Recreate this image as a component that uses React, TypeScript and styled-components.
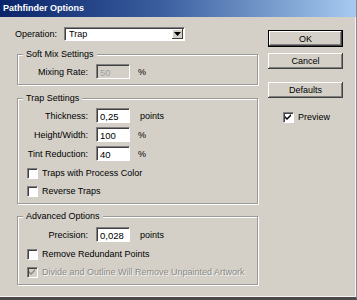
import React from 'react'
import styled, { createGlobalStyle } from 'styled-components'

const GlobalStyle = createGlobalStyle`
    html, body {
        margin: 0;
        padding: 0;
        background: #d4d0c8;
    }
    body {
        font-family: 'Liberation Sans', Arial, sans-serif;
        font-size: 9px;
        color: #000;
    }
`

const Window = styled.div`
    width: 357px;
    height: 300px;
    box-sizing: border-box;
    background: #d4d0c8;
    border-right: 1px solid #8a8a8a;
    border-bottom: 3px solid #4a4a4a;
    box-shadow: inset -1px -1px 0 #f4f4f4;
    display: flex;
    flex-direction: column;
`

const TitleBar = styled.div`
    height: 17px;
    flex: none;
    background: linear-gradient(to right, #0a246a 0%, #3a5e9e 45%, #a6caf0 100%);
    color: #fff;
    font-weight: bold;
    font-size: 9px;
    line-height: 17px;
    padding-left: 3px;
`

const Body = styled.div`
    flex: 1;
    display: flex;
`

const Main = styled.div`
    width: 258px;
    padding: 10px 0 0 15px;
    box-sizing: border-box;
    display: flex;
    flex-direction: column;
`

const Side = styled.div`
    padding: 13px 0 0 10px;
    display: flex;
    flex-direction: column;
    align-items: flex-start;
`

const OperationRow = styled.div`
    display: flex;
    align-items: center;
    gap: 7px;
    height: 14px;
`

const Select = styled.div`
    width: 121px;
    height: 14px;
    box-sizing: border-box;
    background: #fff;
    border: 1px solid;
    border-color: #808080 #fff #fff #808080;
    box-shadow: inset 1px 1px 0 #404040;
    display: flex;
    align-items: stretch;
    padding: 1px 1px 1px 4px;
`

const SelectValue = styled.span`
    flex: 1;
    line-height: 11px;
`

const SelectArrow = styled.span`
    width: 11px;
    background: #d4d0c8;
    box-shadow: inset -1px -1px 0 #404040, inset 1px 1px 0 #fff;
    display: flex;
    align-items: center;
    justify-content: center;
`

const Group = styled.fieldset<{ $mt: number; $pt: number; $pb: number }>`
    margin: ${p => p.$mt}px 0 0 2px;
    width: 241px;
    box-sizing: border-box;
    border: 1px solid #9c9a96;
    box-shadow: 1px 1px 0 #fff, inset 1px 1px 0 #fff;
    padding: ${p => p.$pt}px 0 ${p => p.$pb}px 0;
    min-inline-size: 0;
    display: flex;
    flex-direction: column;
`

const Legend = styled.legend`
    margin-left: 5px;
    padding: 0 3px;
    line-height: 12px;
    background: #d4d0c8;
`

const FieldRow = styled.div`
    display: grid;
    grid-template-columns: 70px 34px auto;
    column-gap: 8px;
    align-items: center;
    height: 15px;
    & + & {
        margin-top: 4px;
    }
`

const FieldLabel = styled.span`
    text-align: right;
`

const Unit = styled.span<{ $gap?: number }>`
    margin-left: ${p => p.$gap ?? 0}px;
`

const TextBox = styled.input<{ $disabled?: boolean }>`
    width: 34px;
    height: 15px;
    box-sizing: border-box;
    margin: 0;
    padding: 1px 0 0 3px;
    font: inherit;
    font-size: 9.5px;
    color: ${p => (p.$disabled ? '#a0a0a0' : '#000')};
    background: ${p => (p.$disabled ? '#d4d0c8' : '#fff')};
    border: 1px solid;
    border-color: #808080 #fff #fff #808080;
    box-shadow: inset 1px 1px 0 #404040;
    outline: none;
`

const CheckRow = styled.div<{ $mt: number; $disabled?: boolean }>`
    display: flex;
    align-items: center;
    gap: 4px;
    margin: ${p => p.$mt}px 0 0 9px;
    height: 12px;
    color: ${p => (p.$disabled ? '#8c8a86' : '#000')};
    text-shadow: ${p => (p.$disabled ? '1px 1px 0 #f4f4f4' : 'none')};
`

const CheckBox = styled.span<{ $disabled?: boolean }>`
    width: 11px;
    height: 11px;
    box-sizing: border-box;
    flex: none;
    background: ${p => (p.$disabled ? '#d4d0c8' : '#fff')};
    border: 1px solid;
    border-color: #808080 #fff #fff #808080;
    box-shadow: inset 1px 1px 0 #404040;
    display: flex;
    align-items: center;
    justify-content: center;
`

const Button = styled.div<{ $default?: boolean; $mt: number }>`
    width: 75px;
    height: ${p => (p.$default ? 17 : 16)}px;
    margin-top: ${p => p.$mt}px;
    box-sizing: border-box;
    background: #d4d0c8;
    border: ${p => (p.$default ? '1px solid #000' : 'none')};
    box-shadow: inset -1px -1px 0 #404040, inset 1px 1px 0 #fff, inset -2px -2px 0 #808080;
    display: flex;
    align-items: center;
    justify-content: center;
`

const PreviewRow = styled(CheckRow)`
    margin: 13px 0 0 15px;
`

const Check = ({ color = '#000' }: { color?: string }) => (
    <svg width="7" height="7" viewBox="0 0 7 7">
        <path d="M0 2 L2 4 L6 0 L6 2 L2 6 L0 4 Z" fill={color} />
    </svg>
)

const App = () => (
    <>
        <GlobalStyle />
        <Window>
            <TitleBar>Pathfinder Options</TitleBar>
            <Body>
                <Main>
                    <OperationRow>
                        <span>Operation:</span>
                        <Select>
                            <SelectValue>Trap</SelectValue>
                            <SelectArrow>
                                <svg width="7" height="4" viewBox="0 0 7 4">
                                    <path d="M0 0 H7 L3.5 4 Z" fill="#000" />
                                </svg>
                            </SelectArrow>
                        </Select>
                    </OperationRow>

                    <Group $mt={7} $pt={4} $pb={5}>
                        <Legend>Soft Mix Settings</Legend>
                        <FieldRow>
                            <FieldLabel>Mixing Rate:</FieldLabel>
                            <TextBox $disabled readOnly defaultValue="50" />
                            <Unit>%</Unit>
                        </FieldRow>
                    </Group>

                    <Group $mt={7} $pt={4} $pb={6}>
                        <Legend>Trap Settings</Legend>
                        <FieldRow>
                            <FieldLabel>Thickness:</FieldLabel>
                            <TextBox readOnly defaultValue="0,25" />
                            <Unit $gap={2}>points</Unit>
                        </FieldRow>
                        <FieldRow>
                            <FieldLabel>Height/Width:</FieldLabel>
                            <TextBox readOnly defaultValue="100" />
                            <Unit>%</Unit>
                        </FieldRow>
                        <FieldRow>
                            <FieldLabel>Tint Reduction:</FieldLabel>
                            <TextBox readOnly defaultValue="40" />
                            <Unit>%</Unit>
                        </FieldRow>
                        <CheckRow $mt={6}>
                            <CheckBox />
                            <span>Traps with Process Color</span>
                        </CheckRow>
                        <CheckRow $mt={6}>
                            <CheckBox />
                            <span>Reverse Traps</span>
                        </CheckRow>
                    </Group>

                    <Group $mt={6} $pt={5} $pb={6}>
                        <Legend>Advanced Options</Legend>
                        <FieldRow>
                            <FieldLabel>Precision:</FieldLabel>
                            <TextBox readOnly defaultValue="0,028" />
                            <Unit $gap={2}>points</Unit>
                        </FieldRow>
                        <CheckRow $mt={6}>
                            <CheckBox />
                            <span>Remove Redundant Points</span>
                        </CheckRow>
                        <CheckRow $mt={6} $disabled>
                            <CheckBox $disabled>
                                <Check color="#8c8a86" />
                            </CheckBox>
                            <span>Divide and Outline Will Remove Unpainted Artwork</span>
                        </CheckRow>
                    </Group>
                </Main>

                <Side>
                    <Button $default $mt={0}>OK</Button>
                    <Button $mt={6}>Cancel</Button>
                    <Button $mt={13}>Defaults</Button>
                    <PreviewRow $mt={13}>
                        <CheckBox>
                            <Check />
                        </CheckBox>
                        <span>Preview</span>
                    </PreviewRow>
                </Side>
            </Body>
        </Window>
    </>
)

export default App
